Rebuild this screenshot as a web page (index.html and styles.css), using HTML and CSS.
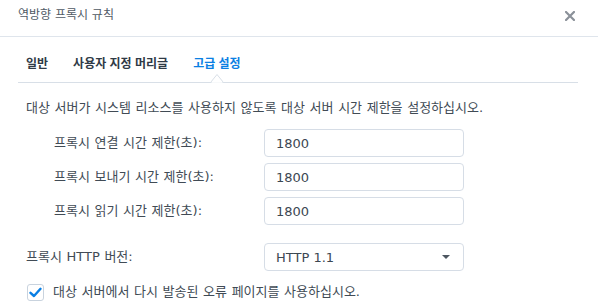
FILE: index.html
```html
<!DOCTYPE html>
<html lang="ko">
<head>
<meta charset="utf-8">
<title>역방향 프록시 규칙</title>
<link rel="stylesheet" href="styles.css">
</head>
<body>
<div class="dialog">
  <div class="header">
    <span class="title">역방향 프록시 규칙</span>
    <span class="close" aria-label="닫기">
      <svg width="10" height="10" viewBox="0 0 10 10"><path d="M1 1 L9 9 M9 1 L1 9" stroke="#8b9199" stroke-width="2.2" stroke-linecap="square"/></svg>
    </span>
  </div>
  <div class="tabs">
    <span class="tab">일반</span>
    <span class="tab">사용자 지정 머리글</span>
    <span class="tab active">고급 설정
      <svg class="notch" width="13" height="9" viewBox="0 0 13 9"><polygon points="0,8.5 6.5,0.5 13,8.5" fill="#fff" stroke="#d8dfe7" stroke-width="1"/><rect x="1" y="8.2" width="11" height="1" fill="#fff"/></svg>
    </span>
  </div>
  <div class="content">
    <p class="desc">대상 서버가 시스템 리소스를 사용하지 않도록 대상 서버 시간 제한을 설정하십시오.</p>
    <div class="form">
      <div class="row">
        <label class="label indent">프록시 연결 시간 제한(초):</label>
        <div class="field"><span class="value">1800</span></div>
      </div>
      <div class="row">
        <label class="label indent">프록시 보내기 시간 제한(초):</label>
        <div class="field"><span class="value">1800</span></div>
      </div>
      <div class="row">
        <label class="label indent">프록시 읽기 시간 제한(초):</label>
        <div class="field"><span class="value">1800</span></div>
      </div>
      <div class="row select-row">
        <label class="label">프록시 HTTP 버전:</label>
        <div class="field select"><span class="value">HTTP 1.1</span><span class="caret"></span></div>
      </div>
    </div>
    <div class="check-row">
      <span class="checkbox">
        <svg width="13" height="11" viewBox="0 0 13 11"><path d="M1.5 5.8 L5 9 L11.5 1.8" fill="none" stroke="#0a7fe4" stroke-width="2.4" stroke-linecap="round" stroke-linejoin="round"/></svg>
      </span>
      <span class="check-label">대상 서버에서 다시 발송된 오류 페이지를 사용하십시오.</span>
    </div>
  </div>
</div>
</body>
</html>
```
FILE: styles.css
```css
html, body {
  margin: 0;
  padding: 0;
  background: #ffffff;
}

body {
  font-family: "DejaVu Sans", "Noto Sans CJK KR", sans-serif;
  font-size: 13px;
  color: #414b55;
  width: 598px;
}

.dialog {
  width: 598px;
}

.header {
  display: flex;
  align-items: flex-start;
  height: 37px;
  box-sizing: border-box;
  padding: 5px 23px 0 18px;
  border-bottom: 1px solid #dfe5ec;
}

.title {
  font-size: 12px;
  line-height: 20px;
  color: #505a65;
}

.close {
  margin-left: auto;
  margin-top: 6px;
  display: flex;
}

.tabs {
  display: flex;
  margin: 0 20px 0 18px;
  padding: 16px 0 9px 0;
  border-bottom: 1px solid #d8dfe7;
}

.tab {
  position: relative;
  font-family: "Noto Sans CJK KR", sans-serif;
  font-size: 12px;
  font-weight: bold;
  line-height: 20px;
  color: #2f3a46;
  padding: 0 8px;
  margin-right: 9px;
}

.tab.active {
  color: #0b80e3;
}

.notch {
  position: absolute;
  left: 50%;
  bottom: -10px;
  transform: translateX(-50%);
  display: block;
}

.content {
  padding: 0 0 0 26px;
  word-spacing: 0.5px;
}

.desc {
  margin: 0;
  padding-top: 15px;
  line-height: 20px;
}

.form {
  display: flex;
  flex-direction: column;
  gap: 6px;
  margin-top: 11px;
}

.row {
  display: grid;
  grid-template-columns: 238px 200px;
  align-items: center;
}

.select-row {
  margin-top: 12px;
}

.label {
  line-height: 20px;
}

.label.indent {
  padding-left: 28px;
}

.field {
  height: 28px;
  box-sizing: border-box;
  border: 1px solid #d6dde6;
  border-radius: 4px;
  display: flex;
  align-items: center;
  padding: 0 11px;
}

.value {
  font-family: "DejaVu Sans", "Noto Sans", sans-serif;
  font-size: 13px;
  color: #3c4752;
  word-spacing: 0;
}

.select {
  justify-content: space-between;
}

.caret {
  width: 0;
  height: 0;
  border-left: 4px solid transparent;
  border-right: 4px solid transparent;
  border-top: 4px solid #4d5660;
  margin-right: 2px;
}

.check-row {
  display: flex;
  align-items: center;
  margin-top: 11px;
  padding-left: 1px;
}

.checkbox {
  width: 17px;
  height: 17px;
  box-sizing: border-box;
  border: 1px solid #c9d3de;
  border-radius: 3px;
  display: flex;
  align-items: center;
  justify-content: center;
}

.check-label {
  margin-left: 9px;
  line-height: 20px;
}
```
